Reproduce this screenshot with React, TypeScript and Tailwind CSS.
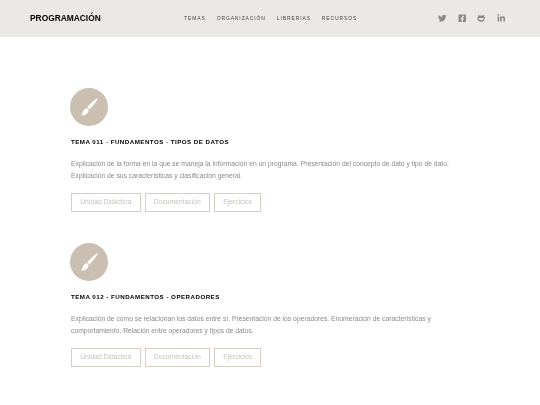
import { FaTwitter, FaFacebookSquare, FaLinkedinIn } from "react-icons/fa";

const nav = ["TEMAS", "ORGANIZACIÓN", "LIBRERIAS", "RECURSOS"];

function Brush() {
  return (
    <svg viewBox="0 0 24 24" className="w-[24px] h-[24px]" fill="currentColor">
      <path d="M21.200 2.800C17.500 4.800 12.800 8.800 10.200 12.300L12.400 14.500C15.800 11.300 19.300 7 21.200 2.800z" />
      <path d="M9.600 13L11.700 15.200C11.500 17.200 9.700 19.300 8 20.100C6.500 20.700 4.800 20.600 4.200 20.200C5.500 19.200 5.200 17.500 6.300 15.700C7.100 14.400 8.300 13.500 9.600 13z" />
    </svg>
  );
}

function Github() {
  return (
    <svg viewBox="0 0 16 16" className="w-[8.500px] h-[8.500px]" fill="currentColor">
      <path d="M2.500 1.500l2.800 1.600c1.800-.4 3.600-.4 5.400 0l2.800-1.600.4 3.500c.7.900 1 1.900 1 3 0 4.200-3 6.500-7.200 6.500S.8 12.200.8 8c0-1.100.3-2.100 1-3z" />
      <path fill="#ebe9e5" d="M4.600 7.500h6.800c1 0 1.600.6 1.600 1.600 0 1.700-2 2.600-5 2.600s-5-.9-5-2.600c0-1 .6-1.600 1.600-1.600z" />
    </svg>
  );
}

function Topic({ title, lines }: { title: string; lines: string[] }) {
  return (
    <section className="flex flex-col items-start">
      <div className="ml-[-1px] w-[38px] h-[38px] rounded-full bg-[#cbbfb1] flex items-center justify-center text-white">
        <Brush />
      </div>
      <h3 className="mt-[11px] text-[6.2px] leading-[10px] font-bold tracking-[0.47px] text-black">{title}</h3>
      <div className="mt-[11px] text-[6.75px] leading-[12px] text-[#8a8a8a]">
        {lines.map((l) => (
          <p key={l}>{l}</p>
        ))}
      </div>
      <div className="mt-[11px] flex gap-[4px]">
        {["Unidad Didáctica", "Documentación", "Ejercicios"].map((b) => (
          <span key={b} className="h-[19px] px-[8.250px] flex items-center border border-[#d6cfc5] text-[6.75px] text-[#c8c4bc]">
            {b}
          </span>
        ))}
      </div>
    </section>
  );
}

export default function App() {
  return (
    <div className="w-[540px] h-[405px] overflow-hidden bg-white font-['Liberation_Sans',Arial,sans-serif]">
      <header className="h-[37px] bg-[#ebe9e5] pl-[30px] pr-[35px]">
        <div className="h-full flex items-center blur-[0.35px]">
          <div className="w-[154px] text-[8.4px] font-bold text-black">PROGRAMACIÓN</div>
          <nav className="flex gap-[11px]">
            {nav.map((n) => (
              <span key={n} className="text-[5px] tracking-[0.88px] text-[#444]">{n}</span>
            ))}
          </nav>
          <div className="ml-auto flex items-center gap-[11px] text-[#888]">
            <FaTwitter className="w-[8.500px] h-[8.500px]" />
            <FaFacebookSquare className="w-[8.500px] h-[8.500px]" />
            <Github />
            <FaLinkedinIn className="w-[8.500px] h-[8.500px]" />
          </div>
        </div>
      </header>
      <main className="pl-[71px] pt-[51px] flex flex-col gap-[31px] blur-[0.35px]">
        <Topic
          title="TEMA 011 - FUNDAMENTOS - TIPOS DE DATOS"
          lines={[
            "Explicación de la forma en la que se maneja la información en un programa. Presentación del concepto de dato y tipo de dato.",
            "Explicación de sus características y clasificación general.",
          ]}
        />
        <Topic
          title="TEMA 012 - FUNDAMENTOS - OPERADORES"
          lines={[
            "Explicación de cómo se relacionan los datos entre sí. Presentación de los operadores. Enumeración de características y",
            "comportamiento. Relación entre operadores y tipos de datos.",
          ]}
        />
      </main>
    </div>
  );
}
